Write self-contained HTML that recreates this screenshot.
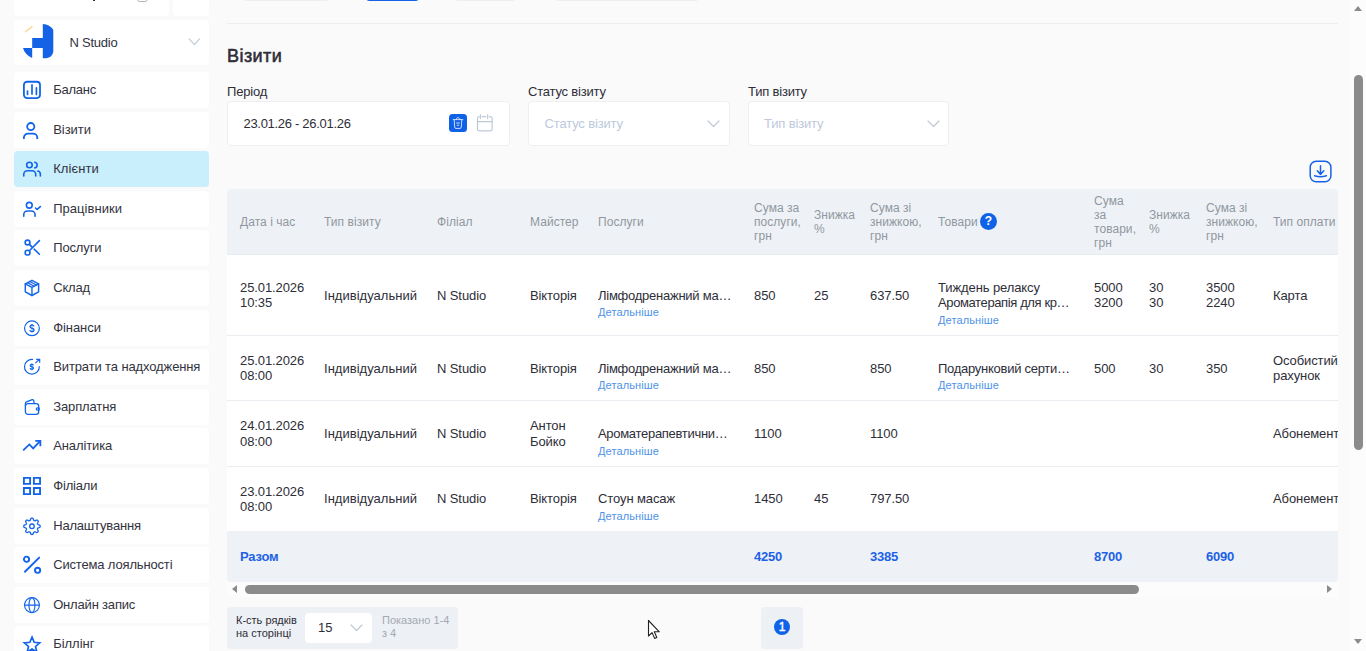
<!DOCTYPE html>
<html lang="uk">
<head>
<meta charset="utf-8">
<title>Візити</title>
<style>
*{box-sizing:border-box;margin:0;padding:0}
html,body{width:1366px;height:651px;overflow:hidden;background:#fafafa;font-family:"Liberation Sans",sans-serif;color:#2e2e38;font-size:13px}
body{position:relative}
.abs{position:absolute}
/* sidebar */
.card{position:absolute;left:14px;width:195px;background:#fff;border-radius:4px}
.nav{position:absolute;left:14px;width:195px;height:36px;background:#fff;border-radius:4px}
.nav.act{background:#c9eefc}
.nav span{position:absolute;left:39.2px;top:0;line-height:36px;font-size:13px;color:#33333d;white-space:nowrap;letter-spacing:-0.25px}
.nav svg{position:absolute;left:8px;top:8px;width:20px;height:20px;fill:none;stroke:#1264ea;stroke-width:1.6;stroke-linecap:round;stroke-linejoin:round}
/* main */
.lbl{position:absolute;font-size:13px;color:#2e2e38;line-height:16px;white-space:nowrap;letter-spacing:-0.2px}
.inp{position:absolute;top:101px;height:44.5px;background:#fff;border:1px solid #efeff1;border-radius:4px}
.ph{position:absolute;left:15.5px;top:0;line-height:43px;font-size:13px;color:#bcc9dc;white-space:nowrap;letter-spacing:-0.15px}
.chev{position:absolute;fill:none;stroke:#c0cad6;stroke-width:1.2;stroke-linecap:round;stroke-linejoin:round}
/* table */
#tbl{position:absolute;left:227px;top:189px;width:1111px;height:392.5px;overflow:hidden;background:#fff;border-radius:4px 4px 4px 4px}
.th{position:absolute;left:0;top:0;width:1111px;height:66px;background:#eef2f6;border-bottom:1px solid #e8ecf0}
.h{position:absolute;font-size:12px;line-height:14px;color:#9197a0;white-space:nowrap;letter-spacing:0.05px}
.row{position:absolute;left:0;width:1111px;border-bottom:1px solid #eceef1}
.c{position:absolute;font-size:13px;line-height:15px;color:#2e2e38;white-space:nowrap;letter-spacing:-0.1px}
.d{position:absolute;font-size:11px;line-height:13px;color:#4d92e8;white-space:nowrap;letter-spacing:0.1px}
.tot{position:absolute;left:0;top:342px;width:1111px;height:50.5px;background:#eef2f6}
.t{position:absolute;top:18px;font-size:13px;line-height:15px;font-weight:bold;color:#1d62e6;white-space:nowrap;letter-spacing:-0.2px}
</style>
</head>
<body>
<!-- SIDEBAR -->
<div id="sidebar">
<!-- top partial cards -->
<div class="card" style="top:-20px;height:36px;width:155px"></div>
<div class="card" style="left:173px;top:-20px;height:36px;width:36px"></div>
<div class="abs" style="left:92.5px;top:-11.5px;width:2px;height:12.2px;background:#33333d"></div>
<div class="abs" style="left:137px;top:-10px;width:10.5px;height:12px;border:1px solid #b5b5bd;border-radius:3px"></div>
<!-- studio card -->
<div class="card" style="top:20px;height:45px">
  <svg class="abs" style="left:8px;top:3px" width="36" height="38" viewBox="22 23 36 38">
    <path d="M42.800 24 C47.500 24.300 51.300 26.200 53.300 29.800 V52.300 C52.300 55.800 50 57.800 46.300 58.300 H42.800 V48.100 H32.200 V38.100 H42.800 Z" fill="#1463e6"/>
    <path d="M23 48.100 H32.200 V58 C27.500 56.300 24.300 52.800 23 48.100 Z" fill="#1463e6"/>
    <path d="M25.700 31.600 L31.900 26.800" stroke="#fbe0ae" stroke-width="1.900" stroke-linecap="round"/>
  </svg>
  <span class="abs" style="left:55.500px;top:0;line-height:45px;font-size:13px;color:#33333d;letter-spacing:-0.25px">N Studio</span>
  <svg class="chev" style="left:173.500px;top:18px" width="13" height="9" viewBox="0 0 13 9"><path d="M1.2 0.9 L6.4 6.6 L11.6 0.9"/></svg>
</div>
<div class="nav" style="top:72.0px"><svg viewBox="0 0 20 20"><rect x="1.9" y="1.75" width="16.1" height="16.3" rx="3.2" stroke-width="1.8"/><path stroke-width="1.7" d="M5.5 11v3.500M10 4.900v9.100M14.400 7.900v6.600"/></svg><span style="letter-spacing:-0.26px">Баланс</span></div>
<div class="nav" style="top:111.6px"><svg viewBox="0 0 20 20"><circle cx="8.76" cy="6.600" r="3.6" stroke-width="1.8"/><path stroke-width="1.8" stroke-linecap="butt" d="M1.900 19.100v-1.500a4 4 0 0 1 4-4h5.360a4 4 0 0 1 4 4v1.500"/></svg><span style="letter-spacing:-0.03px">Візити</span></div>
<div class="nav act" style="top:151.2px"><svg viewBox="0 0 20 20"><circle cx="7.43" cy="6" r="2.800" stroke-width="1.600"/><path stroke-width="1.600" d="M1.760 16.900v-1.500a3.600 3.600 0 0 1 3.600-3.600h4.780a3.600 3.600 0 0 1 3.600 3.600v1.500"/><path stroke-width="1.600" d="M12.800 3.200a2.900 2.900 0 0 1 0 5.700M15.900 12.100a3.300 3.300 0 0 1 2.450 3.200v1.600"/></svg><span style="letter-spacing:0.1px">Клієнти</span></div>
<div class="nav" style="top:190.8px"><svg viewBox="0 0 20 20"><circle cx="7.29" cy="6.260" r="2.900" stroke-width="1.600"/><path stroke-width="1.600" d="M1.760 17.300v-1.700a3.600 3.600 0 0 1 3.600-3.600h4.100a3.600 3.600 0 0 1 3.600 3.600v1.700"/><path stroke-width="1.600" d="M13.500 9l1.600 1.400 3.250-2.760"/></svg><span style="letter-spacing:0.04px">Працівники</span></div>
<div class="nav" style="top:230.4px"><svg viewBox="0 0 20 20"><circle cx="5.54" cy="4.510" r="2.400" stroke-width="1.600"/><circle cx="5.54" cy="14.650" r="2.400" stroke-width="1.600"/><path stroke-width="1.600" d="M7.400 12.700L17.430 2.660M7.400 6.400l2.900 2.950M12.130 11.200l5.300 5.060"/></svg><span style="letter-spacing:-0.14px">Послуги</span></div>
<div class="nav" style="top:270.0px"><svg viewBox="0 0 20 20"><path stroke-width="1.450" d="M9.960 2.300l6.640 3.500v8l-6.640 3.700-6.660-3.700v-8z"/><path stroke-width="1.400" d="M3.300 5.800l6.660 3.600 6.640-3.600M9.960 9.400v8.100"/><path stroke-width="1.150" d="M5.520 4.630l6.660 3.600M7.740 3.470l6.660 3.600"/></svg><span style="letter-spacing:-0.2px">Склад</span></div>
<div class="nav" style="top:309.6px"><svg viewBox="0 0 20 20"><circle cx="9.960" cy="10.300" r="7.400" stroke-width="1.200"/><path stroke-width="1.4" stroke-linecap="butt" d="M11.96 8.46C11.76 7.34 10.96 7.10 9.96 7.10C8.76 7.10 8.06 7.66 8.06 8.62C8.06 9.90 8.96 10.14 9.96 10.30C11.06 10.49 11.96 10.78 11.96 11.98C11.96 12.94 11.16 13.50 9.96 13.50C8.96 13.50 8.16 13.26 7.86 12.14M9.96 6.00V7.10M9.96 13.50V14.60"/><path stroke-width="0.9" stroke-opacity="0.5" stroke-linecap="butt" d="M9.96 7.10V13.50"/></svg><span style="letter-spacing:-0.07px">Фінанси</span></div>
<div class="nav" style="top:349.2px"><svg viewBox="0 0 20 20"><path stroke-width="1.200" d="M10.500 2.400a7.400 7.400 0 1 0 6.800 7.100"/><path stroke-width="1.150" stroke-linecap="butt" stroke-linejoin="miter" d="M13.280 6.090l4.100-3.600M14.200 2.300h3.500v3.400"/><path stroke-width="1.35" stroke-linecap="butt" d="M11.40 8.37C11.24 7.51 10.60 7.33 9.80 7.33C8.84 7.33 8.28 7.76 8.28 8.49C8.28 9.47 9.00 9.66 9.80 9.78C10.68 9.93 11.40 10.15 11.40 11.07C11.40 11.80 10.76 12.23 9.80 12.23C9.00 12.23 8.36 12.05 8.12 11.19M9.80 6.43V7.33M9.80 12.23V13.13"/><path stroke-width="0.9" stroke-opacity="0.5" stroke-linecap="butt" d="M9.80 7.33V12.23"/></svg><span style="letter-spacing:-0.12px">Витрати та надходження</span></div>
<div class="nav" style="top:388.8px"><svg viewBox="0 0 20 20"><rect x="3.400" y="6.700" width="13.300" height="10.600" rx="2.600" stroke-width="1.300"/><path stroke-width="1.300" d="M3.400 9V6.400c0-.8.400-1.300 1.100-1.500l5.700-2.200c.7-.2 1.300.1 1.500.8l.5 3"/><rect x="14.300" y="10.900" width="3.100" height="2.300" rx="1.150" stroke-width="1.250"/></svg><span style="letter-spacing:-0.12px">Зарплатня</span></div>
<div class="nav" style="top:428.4px"><svg viewBox="0 0 20 20"><path stroke-width="1.800" stroke-linejoin="miter" d="M1.700 13.800l5.590-5.380 3.910 3.920 6.600-7"/><path stroke-width="1.800" stroke-linecap="butt" stroke-linejoin="miter" d="M13.280 4.970h5.070v5.300"/></svg><span style="letter-spacing:-0.11px">Аналітика</span></div>
<div class="nav" style="top:468.0px"><svg viewBox="0 0 20 20"><path stroke-width="1.850" stroke-linejoin="miter" stroke-linecap="butt" d="M1.900 1.900h6.200v6h-6.200zM11.900 1.900h6.150v6h-6.150zM1.900 11.950h6.200v6.100h-6.200zM11.900 11.950h6.150v6.100h-6.150z"/></svg><span style="letter-spacing:-0.16px">Філіали</span></div>
<div class="nav" style="top:507.6px"><svg viewBox="0 0 20 20"><circle cx="9.960" cy="10.300" r="2.300" stroke-width="1.300"/><path stroke-width="1.300" d="M18.16 10.30L18.14 10.62L18.07 10.94L17.89 11.24L17.54 11.50L16.97 11.69L16.41 11.85L16.04 12.01L15.83 12.21L15.70 12.42L15.60 12.63L15.51 12.86L15.46 13.10L15.47 13.38L15.61 13.76L15.91 14.27L16.17 14.81L16.23 15.25L16.14 15.58L15.97 15.86L15.76 16.10L15.52 16.31L15.24 16.48L14.91 16.57L14.47 16.51L13.93 16.25L13.42 15.95L13.04 15.81L12.76 15.80L12.52 15.85L12.29 15.94L12.08 16.04L11.87 16.17L11.67 16.38L11.51 16.75L11.35 17.31L11.16 17.88L10.90 18.23L10.60 18.41L10.28 18.48L9.96 18.50L9.64 18.48L9.32 18.41L9.02 18.23L8.76 17.88L8.57 17.31L8.41 16.75L8.25 16.38L8.05 16.17L7.84 16.04L7.63 15.94L7.40 15.85L7.16 15.80L6.88 15.81L6.50 15.95L5.99 16.25L5.45 16.51L5.01 16.57L4.68 16.48L4.40 16.31L4.16 16.10L3.95 15.86L3.78 15.58L3.69 15.25L3.75 14.81L4.01 14.27L4.31 13.76L4.45 13.38L4.46 13.10L4.41 12.86L4.32 12.63L4.22 12.42L4.09 12.21L3.88 12.01L3.51 11.85L2.95 11.69L2.38 11.50L2.03 11.24L1.85 10.94L1.78 10.62L1.76 10.30L1.78 9.98L1.85 9.66L2.03 9.36L2.38 9.10L2.95 8.91L3.51 8.75L3.88 8.59L4.09 8.39L4.22 8.18L4.32 7.97L4.41 7.74L4.46 7.50L4.45 7.22L4.31 6.84L4.01 6.33L3.75 5.79L3.69 5.35L3.78 5.02L3.95 4.74L4.16 4.50L4.40 4.29L4.68 4.12L5.01 4.03L5.45 4.09L5.99 4.35L6.50 4.65L6.88 4.79L7.16 4.80L7.40 4.75L7.63 4.66L7.84 4.56L8.05 4.43L8.25 4.22L8.41 3.85L8.57 3.29L8.76 2.72L9.02 2.37L9.32 2.19L9.64 2.12L9.96 2.10L10.28 2.12L10.60 2.19L10.90 2.37L11.16 2.72L11.35 3.29L11.51 3.85L11.67 4.22L11.87 4.43L12.08 4.56L12.29 4.66L12.52 4.75L12.76 4.80L13.04 4.79L13.42 4.65L13.93 4.35L14.47 4.09L14.91 4.03L15.24 4.12L15.52 4.29L15.76 4.50L15.97 4.74L16.14 5.02L16.23 5.35L16.17 5.79L15.91 6.33L15.61 6.84L15.47 7.22L15.46 7.50L15.51 7.74L15.60 7.97L15.70 8.18L15.83 8.39L16.04 8.59L16.41 8.75L16.97 8.91L17.54 9.10L17.89 9.36L18.07 9.66L18.14 9.98Z"/></svg><span style="letter-spacing:-0.19px">Налаштування</span></div>
<div class="nav" style="top:547.2px"><svg viewBox="0 0 20 20"><circle cx="4.530" cy="4.250" r="2.600" stroke-width="1.900"/><circle cx="15.600" cy="15.300" r="2.600" stroke-width="1.900"/><path stroke-width="1.900" d="M2.900 16.700L17.200 2.630"/></svg><span style="letter-spacing:-0.16px">Система лояльності</span></div>
<div class="nav" style="top:586.8px"><svg viewBox="0 0 20 20"><circle cx="9.960" cy="10.100" r="7.450" stroke-width="1.150"/><path stroke-width="1.150" d="M2.500 10.100h14.900"/><ellipse cx="9.960" cy="10.100" rx="3" ry="7.450" stroke-width="1.150"/></svg><span style="letter-spacing:-0.18px">Онлайн запис</span></div>
<div class="nav" style="top:626.4px"><svg viewBox="0 0 20 20"><path stroke-width="1.700" stroke-linejoin="miter" d="M10.02 3.20L12.19 8.31L17.72 8.80L13.54 12.44L14.78 17.85L10.02 15.00L5.26 17.85L6.50 12.44L2.32 8.80L7.85 8.31Z"/></svg><span style="letter-spacing:-0.03px">Біллінг</span></div>
</div>
<!-- MAIN -->
<div id="main">
<div class="abs" style="left:243px;top:-6px;width:86px;height:7px;background:#eceef1;border-radius:4px"></div>
<div class="abs" style="left:365.5px;top:-6px;width:53.5px;height:7.3px;background:#1763e6;border-radius:4px"></div>
<div class="abs" style="left:455px;top:-6px;width:61px;height:7px;background:#eceef1;border-radius:4px"></div>
<div class="abs" style="left:555px;top:-6px;width:144px;height:7px;background:#eceef1;border-radius:4px"></div>
<div class="abs" style="left:227px;top:23px;width:1111px;height:1px;background:#eceef1"></div>
<div class="abs" style="left:227px;top:44.5px;font-size:18px;line-height:22px;font-weight:normal;-webkit-text-stroke:0.55px #2e2e38;color:#2e2e38;letter-spacing:0.45px">Візити</div>
<div class="lbl" style="left:227px;top:84px">Період</div>
<div class="lbl" style="left:528px;top:84px">Статус візиту</div>
<div class="lbl" style="left:748px;top:84px">Тип візиту</div>
<div class="inp" style="left:227px;width:282.5px"><span class="ph" style="left:15.5px;color:#2e2e38;letter-spacing:-0.3px">23.01.26 - 26.01.26</span>
<div class="abs" style="left:221px;top:12px;width:18px;height:18px;background:#0f62e8;border-radius:3.5px"><svg width="18" height="18" viewBox="0 0 18 18" fill="none" stroke="#dfe9fb" stroke-width="0.9" stroke-linecap="round" stroke-linejoin="round"><path d="M4.2 5.6h9.6M7.4 5.4c0-1.200.5-1.800 1.600-1.800s1.600.6 1.600 1.800M5.200 5.800l.5 7.400c.05.800.5 1.200 1.300 1.200h4c.800 0 1.250-.4 1.300-1.200l.5-7.400M7.600 9h2.800M8.200 11.200h1.600"/></svg></div>
<svg class="abs" style="left:248.2px;top:10.5px" width="18" height="19" viewBox="0 0 18 19" fill="none" stroke="#bdc9d7" stroke-width="1.2" stroke-linecap="round"><path d="M3.200 3.700H3.300a1.800 1.800 0 0 0-1.800 1.800V16a1.800 1.800 0 0 0 1.800 1.800h11a1.800 1.800 0 0 0 1.800-1.800V5.500a1.800 1.800 0 0 0-1.800-1.800h-.6M6.200 3.700H9.600M1.500 8.600H16.100M4.400 1.600V5.600M11.700 1.600V5.600"/></svg>
</div>
<div class="inp" style="left:528px;width:201.5px"><span class="ph">Статус візиту</span><svg class="chev" style="left:178px;top:18px" width="13" height="8" viewBox="0 0 13 8"><path d="M1 1 L6.5 6.5 L12 1"/></svg></div>
<div class="inp" style="left:747.5px;width:201.5px"><span class="ph">Тип візиту</span><svg class="chev" style="left:178px;top:18px" width="13" height="8" viewBox="0 0 13 8"><path d="M1 1 L6.5 6.5 L12 1"/></svg></div>
<svg class="abs" style="left:1309px;top:159.5px" width="24" height="24" viewBox="0 0 24 24" fill="none" stroke="#1763e6" stroke-width="1.5" stroke-linecap="round" stroke-linejoin="round"><rect x="1.2" y="1.2" width="20.7" height="20.6" rx="6"/><path d="M11.5 5.800v8.600M8.300 10.800l3.200 3.600 3.300-3.600M5.600 15.700Q11.500 17.900 17.400 15.700"/></svg>
<div id="tbl"><div class="th"></div>
<div class="h" style="left:13px;top:25.5px">Дата і час</div>
<div class="h" style="left:97px;top:25.5px">Тип візиту</div>
<div class="h" style="left:210px;top:25.5px">Філіал</div>
<div class="h" style="left:303px;top:25.5px">Майстер</div>
<div class="h" style="left:371px;top:25.5px">Послуги</div>
<div class="h" style="left:527px;top:11.5px">Сума за<br>послуги,<br>грн</div>
<div class="h" style="left:587px;top:18.5px">Знижка<br>%</div>
<div class="h" style="left:643px;top:11.5px">Сума зі<br>знижкою,<br>грн</div>
<div class="h" style="left:711px;top:25.5px">Товари</div>
<div class="abs" style="left:753px;top:24.19999999999999px;width:17px;height:16.8px;border-radius:50%;background:#0f62e8;color:#fff;font-size:12px;font-weight:bold;line-height:17px;text-align:center">?</div>
<div class="h" style="left:867px;top:4.5px">Сума<br>за<br>товари,<br>грн</div>
<div class="h" style="left:922px;top:18.5px">Знижка<br>%</div>
<div class="h" style="left:979px;top:11.5px">Сума зі<br>знижкою,<br>грн</div>
<div class="h" style="left:1046px;top:25.5px">Тип оплати</div>
<div class="abs" style="left:0;top:146px;width:1111px;height:1px;background:#e9edf1"></div>
<div class="abs" style="left:0;top:211px;width:1111px;height:1px;background:#e9edf1"></div>
<div class="abs" style="left:0;top:277px;width:1111px;height:1px;background:#e9edf1"></div>
<div class="c" style="left:13px;top:91.00px">25.01.2026</div>
<div class="c" style="left:13px;top:106.00px">10:35</div>
<div class="c" style="left:97px;top:99.00px;letter-spacing:0.02px">Індивідуальний</div>
<div class="c" style="left:210px;top:99.00px">N Studio</div>
<div class="c" style="left:303px;top:99.00px">Вікторія</div>
<div class="c" style="left:371px;top:99.00px;letter-spacing:-0.25px">Лімфодренажний ма…</div>
<div class="d" style="left:371px;top:117.00px">Детальніше</div>
<div class="c" style="left:527px;top:99.00px">850</div>
<div class="c" style="left:587px;top:99.00px">25</div>
<div class="c" style="left:643px;top:99.00px">637.50</div>
<div class="c" style="left:711px;top:91.00px">Тиждень релаксу</div>
<div class="c" style="left:711px;top:106.00px;letter-spacing:-0.38px">Ароматерапія для кр…</div>
<div class="d" style="left:711px;top:124.50px">Детальніше</div>
<div class="c" style="left:867px;top:91.00px">5000</div>
<div class="c" style="left:867px;top:106.00px">3200</div>
<div class="c" style="left:922px;top:91.00px">30</div>
<div class="c" style="left:922px;top:106.00px">30</div>
<div class="c" style="left:979px;top:91.00px">3500</div>
<div class="c" style="left:979px;top:106.00px">2240</div>
<div class="c" style="left:1046px;top:99.00px">Карта</div>
<div class="c" style="left:13px;top:164.00px">25.01.2026</div>
<div class="c" style="left:13px;top:179.00px">08:00</div>
<div class="c" style="left:97px;top:172.00px;letter-spacing:0.02px">Індивідуальний</div>
<div class="c" style="left:210px;top:172.00px">N Studio</div>
<div class="c" style="left:303px;top:172.00px">Вікторія</div>
<div class="c" style="left:371px;top:172.00px;letter-spacing:-0.25px">Лімфодренажний ма…</div>
<div class="d" style="left:371px;top:190.00px">Детальніше</div>
<div class="c" style="left:527px;top:172.00px">850</div>
<div class="c" style="left:643px;top:172.00px">850</div>
<div class="c" style="left:711px;top:172.00px;letter-spacing:-0.27px">Подарунковий серти…</div>
<div class="d" style="left:711px;top:190.00px">Детальніше</div>
<div class="c" style="left:867px;top:172.00px">500</div>
<div class="c" style="left:922px;top:172.00px">30</div>
<div class="c" style="left:979px;top:172.00px">350</div>
<div class="c" style="left:1046px;top:164.00px">Особистий</div>
<div class="c" style="left:1046px;top:179.00px">рахунок</div>
<div class="c" style="left:13px;top:229.00px">24.01.2026</div>
<div class="c" style="left:13px;top:245.00px">08:00</div>
<div class="c" style="left:97px;top:237.00px;letter-spacing:0.02px">Індивідуальний</div>
<div class="c" style="left:210px;top:237.00px">N Studio</div>
<div class="c" style="left:303px;top:229.00px">Антон</div>
<div class="c" style="left:303px;top:245.00px">Бойко</div>
<div class="c" style="left:371px;top:237.00px;letter-spacing:-0.3px">Ароматерапевтични…</div>
<div class="d" style="left:371px;top:255.50px">Детальніше</div>
<div class="c" style="left:527px;top:237.00px">1100</div>
<div class="c" style="left:643px;top:237.00px">1100</div>
<div class="c" style="left:1046px;top:237.00px">Абонемент</div>
<div class="c" style="left:13px;top:295.00px">23.01.2026</div>
<div class="c" style="left:13px;top:310.00px">08:00</div>
<div class="c" style="left:97px;top:302.00px;letter-spacing:0.02px">Індивідуальний</div>
<div class="c" style="left:210px;top:302.00px">N Studio</div>
<div class="c" style="left:303px;top:302.00px">Вікторія</div>
<div class="c" style="left:371px;top:302.00px">Стоун масаж</div>
<div class="d" style="left:371px;top:320.50px">Детальніше</div>
<div class="c" style="left:527px;top:302.00px">1450</div>
<div class="c" style="left:587px;top:302.00px">45</div>
<div class="c" style="left:643px;top:302.00px">797.50</div>
<div class="c" style="left:1046px;top:302.00px">Абонемент</div>
<div class="tot">
<div class="t" style="left:13px">Разом</div>
<div class="t" style="left:527px">4250</div>
<div class="t" style="left:643px">3385</div>
<div class="t" style="left:867px">8700</div>
<div class="t" style="left:979px">6090</div>
</div></div>
<div class="abs" style="left:227px;top:581.5px;width:1111px;height:15px;background:#fcfcfc"></div>
<div class="abs" style="left:245px;top:585px;width:894px;height:9px;background:#8b8b8b;border-radius:4.5px"></div>
<div class="abs" style="left:231.5px;top:585px;width:0;height:0;border:4.5px solid transparent;border-right:5.5px solid #8b8b8b;border-left:0"></div>
<div class="abs" style="left:1327px;top:585px;width:0;height:0;border:4.5px solid transparent;border-left:5.5px solid #8b8b8b;border-right:0"></div>
<div class="abs" style="left:227px;top:607px;width:231px;height:42px;background:#edf0f4;border-radius:4px"></div>
<div class="abs" style="left:236px;top:614px;font-size:11px;line-height:13px;color:#2e2e38;white-space:nowrap">К-сть рядків<br>на сторінці</div>
<div class="abs" style="left:305px;top:613px;width:67px;height:30px;background:#fff;border-radius:4px"><span class="abs" style="left:13px;top:0;line-height:30px;font-size:13px;color:#2e2e38">15</span><svg class="chev" style="left:45px;top:11px" width="13" height="8" viewBox="0 0 13 8"><path d="M1 1 L6.5 6.5 L12 1"/></svg></div>
<div class="abs" style="left:382px;top:614px;font-size:11px;line-height:13px;color:#a3a9b3;white-space:nowrap">Показано 1-4<br>з 4</div>
<div class="abs" style="left:761px;top:607px;width:42px;height:42px;background:#edf0f4;border-radius:4px"><div class="abs" style="left:13px;top:12.3px;width:16.2px;height:16.2px;border-radius:50%;background:#0f62e8;color:#fff;font-size:12px;font-weight:normal;-webkit-text-stroke:0.4px #fff;line-height:16.5px;text-align:center">1</div></div>
<svg class="abs" style="left:647px;top:619px" width="14" height="21" viewBox="0 0 14 21"><path d="M1.5 1.500v15.500l3.600-3.400 2.500 5.800 2.200-.9-2.500-5.700h5z" fill="#fff" stroke="#222" stroke-width="1.1" stroke-linejoin="round"/></svg>
<div class="abs" style="left:1351px;top:0;width:15px;height:651px;background:#fcfcfc"></div>
<div class="abs" style="left:1354px;top:75px;width:9.3px;height:375px;background:#8b8b8b;border-radius:4.6px"></div>
<div class="abs" style="left:1354px;top:5.5px;width:0;height:0;border:4.5px solid transparent;border-bottom:5.5px solid #8b8b8b;border-top:0"></div>
<div class="abs" style="left:1354px;top:639px;width:0;height:0;border:4.5px solid transparent;border-top:5.5px solid #8b8b8b;border-bottom:0"></div>
</div>
</body>
</html>
